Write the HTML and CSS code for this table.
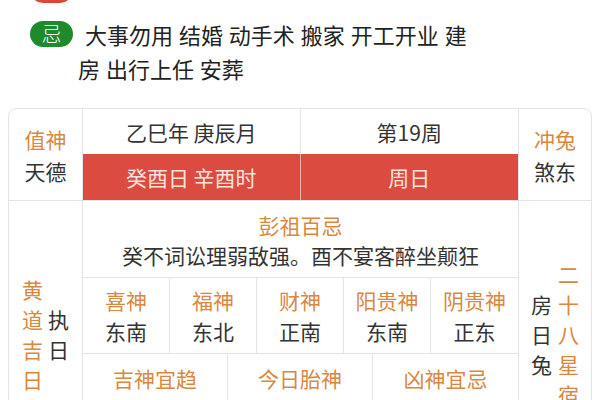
FILE: index.html
```html
<!DOCTYPE html>
<html lang="zh-CN">
<head>
<meta charset="utf-8">
<title>黄历</title>
<link rel="stylesheet" href="styles.css">
</head>
<body>
<div class="page">
  <div class="yi-tail"><span class="badge red">宜</span></div>
  <div class="ji-row">
    <span class="badge green">忌</span>
    <p class="ji-text">大事勿用 结婚 动手术 搬家 开工开业 建房 出行上任 安葬</p>
  </div>
  <div class="card">
    <div class="side-top left-top">
      <div class="lbl">值神</div>
      <div class="val">天德</div>
    </div>
    <div class="mid-top">
      <div class="mt">乙巳年 庚辰月</div>
      <div class="mt">第19周</div>
      <div class="mr">癸酉日 辛酉时</div>
      <div class="mr">周日</div>
    </div>
    <div class="side-top right-top">
      <div class="lbl">冲兔</div>
      <div class="val">煞东</div>
    </div>
    <div class="side-bottom left-bottom">
      <div class="vcol lbl">黄道吉日</div>
      <div class="vcol val">执日</div>
    </div>
    <div class="mid-bottom">
      <div class="pengzu">
        <div class="lbl">彭祖百忌</div>
        <div class="val">癸不词讼理弱敌强。酉不宴客醉坐颠狂</div>
      </div>
      <div class="gods">
        <div class="god"><div class="lbl">喜神</div><div class="val">东南</div></div>
        <div class="god"><div class="lbl">福神</div><div class="val">东北</div></div>
        <div class="god"><div class="lbl">财神</div><div class="val">正南</div></div>
        <div class="god"><div class="lbl">阳贵神</div><div class="val">东南</div></div>
        <div class="god"><div class="lbl">阴贵神</div><div class="val">正东</div></div>
      </div>
      <div class="extra">
        <div class="ex"><div class="lbl">吉神宜趋</div></div>
        <div class="ex"><div class="lbl">今日胎神</div></div>
        <div class="ex"><div class="lbl">凶神宜忌</div></div>
      </div>
    </div>
    <div class="side-bottom right-bottom">
      <div class="vcol val">房日兔</div>
      <div class="vcol lbl">二十八星宿</div>
    </div>
  </div>
</div>
</body>
</html>
```
FILE: styles.css
```css
html, body {
  margin: 0;
  background: #ffffff;
}
body {
  font-family: "Noto Sans CJK SC", "Noto Sans", sans-serif;
  color: #333333;
}
.page {
  padding: 0 8px;
}
.yi-tail {
  height: 3px;
  overflow: hidden;
  display: flex;
  align-items: flex-end;
  padding-left: 22px;
}
.badge {
  flex: none;
  width: 43px;
  height: 26px;
  border-radius: 13px;
  color: #ffffff;
  font-size: 20px;
  font-weight: 300;
  line-height: 26px;
  text-align: center;
}
.red { background: #d9473b; }
.green { background: #1f8a2c; }
.ji-row {
  display: flex;
  align-items: flex-start;
  padding-left: 22px;
  margin-top: 18px;
}
.ji-text {
  margin: -4px 0 0 5px;
  width: 400px;
  font-size: 22px;
  line-height: 34px;
  text-indent: 7px;
  color: #222222;
  word-spacing: 1px;
}
.card {
  margin-top: 23px;
  border: 1px solid #e4e4e4;
  border-radius: 8px;
  display: grid;
  grid-template-columns: 74px 436px 1fr;
  grid-template-rows: 92px auto;
  font-size: 21px;
  overflow: hidden;
}
.lbl { color: #d8883f; }
.val { color: #333333; }
.side-top {
  display: flex;
  flex-direction: column;
  justify-content: center;
  align-items: center;
  line-height: 32px;
  border-bottom: 1px solid #e4e4e4;
}
.left-top { border-right: 1px solid #e4e4e4; }
.mid-top {
  display: grid;
  grid-template-columns: 1fr 1fr;
  grid-template-rows: 45px 46px;
  border-right: 1px solid #e4e4e4;
  border-bottom: 1px solid #e4e4e4;
}
.mt {
  display: flex;
  align-items: center;
  justify-content: center;
  color: #333333;
}
.mt:first-child { border-right: 1px solid #e4e4e4; }
.mr {
  display: flex;
  align-items: center;
  justify-content: center;
  background: #dc4b3f;
  color: #fbe3dc;
}
.mr:nth-child(3) { border-right: 1px solid #f1b3a8; }
.side-bottom {
  display: flex;
  justify-content: center;
  align-items: center;
}
.left-bottom {
  border-right: 1px solid #e4e4e4;
  gap: 5px;
}
.right-bottom { gap: 6px; }
.vcol {
  width: 21px;
  line-height: 30px;
  word-break: break-all;
}
.mid-bottom {
  border-right: 1px solid #e4e4e4;
  display: flex;
  flex-direction: column;
}
.pengzu {
  text-align: center;
  line-height: 30px;
  padding: 9px 0 7px;
  border-bottom: 1px solid #e4e4e4;
}
.gods {
  display: grid;
  grid-template-columns: repeat(5, 1fr);
  border-bottom: 1px solid #e4e4e4;
}
.god {
  text-align: center;
  line-height: 31px;
  padding: 7px 0 6px;
  border-right: 1px solid #e4e4e4;
}
.god:last-child { border-right: none; }
.extra {
  display: grid;
  grid-template-columns: repeat(3, 1fr);
  min-height: 113px;
}
.ex {
  text-align: center;
  line-height: 30px;
  padding-top: 9px;
  border-right: 1px solid #e4e4e4;
}
.ex:last-child { border-right: none; }
```
